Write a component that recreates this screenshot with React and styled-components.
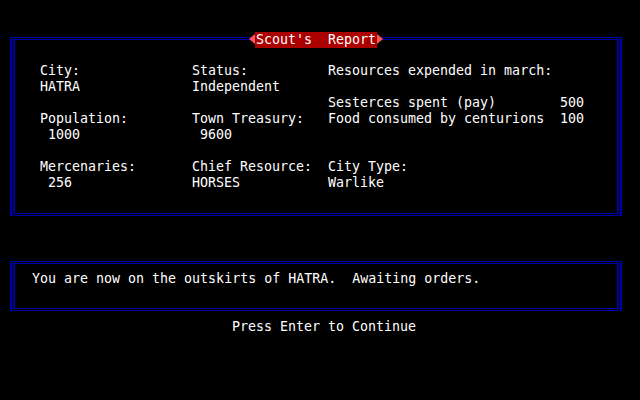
import styled, { createGlobalStyle } from "styled-components";

const GlobalStyle = createGlobalStyle`
  html, body {
    margin: 0;
    padding: 0;
    background: #000000;
  }
`;

const Screen = styled.div`
  width: 640px;
  height: 400px;
  background: #000000;
  color: #ffffff;
  font-family: 'DejaVu Sans Mono', 'Liberation Mono', monospace;
  font-size: 13.3px;
  line-height: 16px;
  padding-top: 37px;
  box-sizing: border-box;
  overflow: hidden;
`;

/* double blue frame: outer border, 1px gap, inner border */
const Frame = styled.div`
  position: relative;
  margin: ${p => p.$top || 0}px 18px 0 10px;
  border-style: solid;
  border-color: #0000aa;
  border-width: 1px 2px;
  padding: 1px;
`;

const FrameInner = styled.div`
  border-style: solid;
  border-color: #0000aa;
  border-width: 1px 2px;
  height: ${p => p.$height}px;
  padding: ${p => p.$pad};
  box-sizing: border-box;
`;

const TitleWrap = styled.div`
  position: absolute;
  top: -6px;
  left: 0;
  right: 0;
  display: flex;
  justify-content: center;
  align-items: center;
`;

const Arrow = styled.div`
  width: 0;
  height: 0;
  border-top: 5px solid transparent;
  border-bottom: 5px solid transparent;
  ${p => p.$dir === "left"
    ? "border-right: 6px solid #ff5555;"
    : "border-left: 6px solid #ff5555;"}
  margin-top: -2px;
`;

const TitleLabel = styled.div`
  background: #aa0000;
  color: #ffffff;
  height: 16px;
  padding: 0 1px 0 1px;
  white-space: pre;
`;

const InfoGrid = styled.div`
  display: grid;
  grid-template-columns: 152px 136px 1fr;
  grid-auto-rows: 16px;
`;

const Cell = styled.div`
  white-space: pre;
  padding-left: ${p => (p.$indent ? 8 : 0)}px;
`;

const ExpenseRow = styled.div`
  display: flex;
  white-space: pre;
`;

const ExpenseLabel = styled.span`
  width: 232px;
`;

const Message = styled.div`
  white-space: pre;
`;

const Prompt = styled.div`
  margin-top: 8px;
  padding-left: 232px;
  white-space: pre;
`;

const App = () => {
  const rows = [
    [{ t: "City:" }, { t: "Status:" }, { t: "Resources expended in march:" }],
    [{ t: "HATRA" }, { t: "Independent" }, { t: "" }],
    [{ t: "" }, { t: "" }, { exp: ["Sesterces spent (pay)", "500"] }],
    [{ t: "Population:" }, { t: "Town Treasury:" }, { exp: ["Food consumed by centurions", "100"] }],
    [{ t: "1000", i: true }, { t: "9600", i: true }, { t: "" }],
    [{ t: "" }, { t: "" }, { t: "" }],
    [{ t: "Mercenaries:" }, { t: "Chief Resource:" }, { t: "City Type:" }],
    [{ t: "256", i: true }, { t: "HORSES" }, { t: "Warlike" }],
  ];

  return (
    <Screen>
      <GlobalStyle />
      <Frame>
        <TitleWrap>
          <Arrow $dir="left" />
          <TitleLabel>Scout's  Report</TitleLabel>
          <Arrow $dir="right" />
        </TitleWrap>
        <FrameInner $height={175} $pad="23px 0 0 25px">
          <InfoGrid>
            {rows.map((row, r) =>
              row.map((c, k) =>
                c.exp ? (
                  <ExpenseRow key={r + "-" + k}>
                    <ExpenseLabel>{c.exp[0]}</ExpenseLabel>
                    <span>{c.exp[1]}</span>
                  </ExpenseRow>
                ) : (
                  <Cell key={r + "-" + k} $indent={c.i}>{c.t}</Cell>
                )
              )
            )}
          </InfoGrid>
        </FrameInner>
      </Frame>
      <Frame $top={45}>
        <FrameInner $height={46} $pad="7px 0 0 17px">
          <Message>You are now on the outskirts of HATRA.  Awaiting orders.</Message>
        </FrameInner>
      </Frame>
      <Prompt>Press Enter to Continue</Prompt>
    </Screen>
  );
};

export default App;
